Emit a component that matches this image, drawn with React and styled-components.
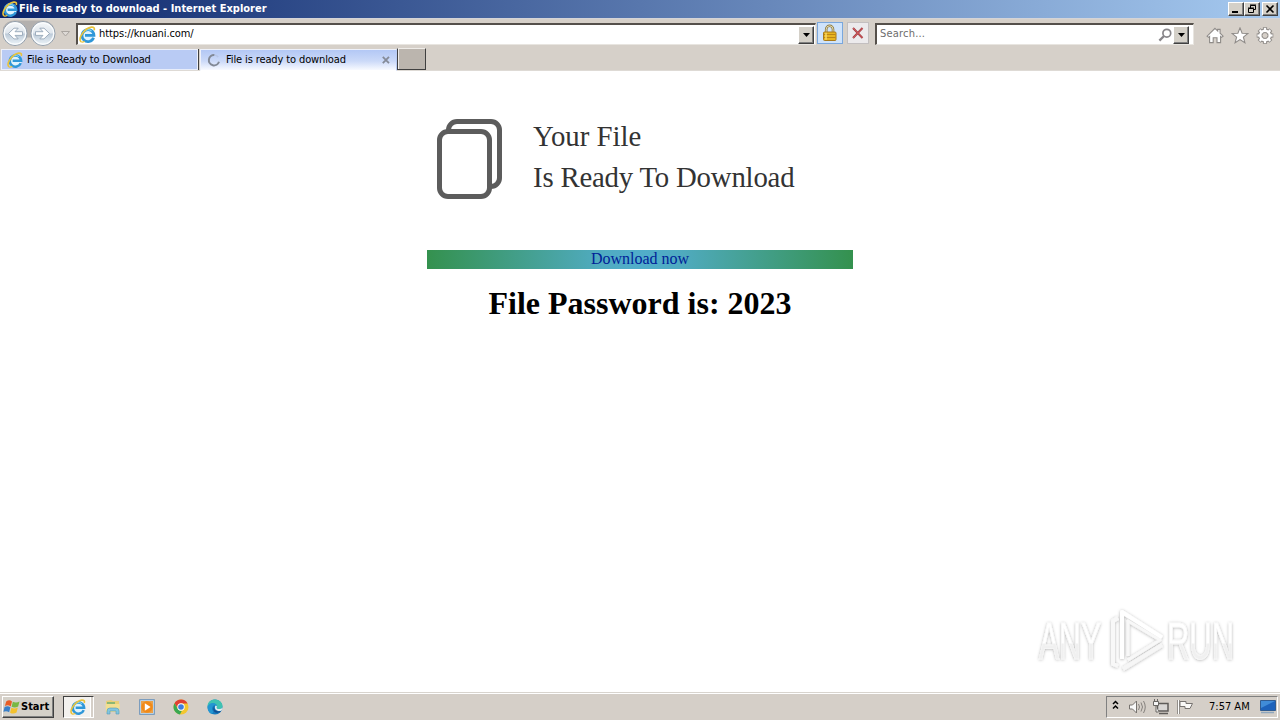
import React from 'react';
import styled, { createGlobalStyle, css } from 'styled-components';

const GlobalStyle = createGlobalStyle`
  html, body {
    margin: 0;
    padding: 0;
    overflow: hidden;
  }
  * { box-sizing: border-box; }
  svg { display: block; flex: none; }
`;

const uiFont = '"DejaVu Sans Condensed", "DejaVu Sans", sans-serif';

const Desktop = styled.div`
  width: 1280px;
  height: 720px;
  display: flex;
  flex-direction: column;
  background: #fff;
  font-family: ${uiFont};
  font-stretch: condensed;
  font-size: 11px;
  color: #000;
`;

const Label = styled.span`
  white-space: nowrap;
  line-height: 14px;
  letter-spacing: ${(p) => p.$spacing || 0}px;
  color: ${(p) => p.$color || 'inherit'};
  font-weight: ${(p) => (p.$bold ? 700 : 400)};
`;

const raised = css`
  background: #d4d0c8;
  border: 1px solid;
  border-color: #fff #404040 #404040 #fff;
  box-shadow: inset -1px -1px 0 #808080;
`;

const TitleBar = styled.div`
  height: 18px;
  flex: none;
  display: flex;
  align-items: center;
  padding: 0 2px 0 2px;
  background: linear-gradient(90deg, #0a246a 0%, #a6caf0 100%);
`;

const TitleText = styled(Label)`
  flex: 1;
  margin-left: 1px;
`;

const WindowButtons = styled.div`
  display: flex;
`;

const WindowButton = styled.div`
  ${raised}
  width: 16px;
  height: 14px;
  margin-left: ${(p) => (p.$gap ? 2 : 0)}px;
  display: flex;
  align-items: center;
  justify-content: center;
`;

const NavBar = styled.div`
  height: 30px;
  flex: none;
  display: flex;
  align-items: flex-start;
  background: #d6d0c9;
  border-top: 1px solid #d4d4d8;
  padding: 3px 0 0 1px;
`;

const Travel = styled.div`
  width: 75px;
  margin-top: -3px;
`;

const Field = styled.div`
  height: 22px;
  width: ${(p) => p.$width}px;
  margin: 1px 0 0 ${(p) => p.$left || 0}px;
  display: flex;
  align-items: center;
  background: #fff;
  border: 1px solid;
  border-color: #55504b #e8e5e0 #e8e5e0 #55504b;
  border-width: 2px 1px 1px 2px;
  padding: 0 ${(p) => p.$right}px 0 1px;
`;

const FieldText = styled(Label)`
  flex: 1;
  margin-top: -1px;
  padding-left: ${(p) => p.$indent || 0}px;
`;

const DropButton = styled.div`
  ${raised}
  width: 16px;
  height: 18px;
  display: flex;
  align-items: center;
  justify-content: center;
`;

const SquareButton = styled.div`
  width: ${(p) => p.$width}px;
  height: 22px;
  margin: 0 0 0 ${(p) => p.$left}px;
  display: flex;
  align-items: center;
  justify-content: center;
  border: 1px solid ${(p) => (p.$active ? '#7aa7dd' : '#c3bfc0')};
  background: ${(p) => (p.$active ? '#cfe3fb' : '#eceaec')};
`;

const Commands = styled.div`
  display: flex;
  gap: 7px;
  margin: 5px 0 0 12px;
`;

const TabRow = styled.div`
  height: 23px;
  flex: none;
  display: flex;
  background: #d6d0c9;
  padding-left: 1px;
  border-bottom: 1px solid #dedad5;
`;

const Tab = styled.div`
  width: ${(p) => p.$width}px;
  height: ${(p) => (p.$active ? 22 : 21)}px;
  margin-top: 1px;
  margin-right: 2px;
  display: flex;
  align-items: center;
  padding: 0 6px 0 5px;
  background: ${(p) => (p.$active ? 'linear-gradient(#b3c8f5, #cbd9f8 55%, #f8faff)' : '#b9cbf4')};
  border: 1px solid #eef1fa;
  border-right-color: ${(p) => (p.$active ? '#b9cbf4' : '#eef1fa')};
  border-bottom-color: ${(p) => (p.$active ? '#fff' : '#e8edfa')};
  box-shadow: ${(p) => (p.$active ? 'none' : '1px 0 0 #404040')};
`;

const TabLabel = styled(Label)`
  flex: 1;
  margin-left: 4px;
`;

const NewTab = styled.div`
  width: 29px;
  height: 22px;
  margin-left: -2px;
  background: #bbb5ae;
  border: 1px solid #404040;
  border-top-color: #efece8;
  box-shadow: inset 1px 0 0 #efece8;
`;

const Page = styled.main`
  position: relative;
  flex: 1;
  min-height: 0;
  background: #fff;
  font-family: "Liberation Serif", "Times New Roman", serif;
  font-stretch: normal;
`;

const Card = styled.section`
  width: 426px;
  margin: 0 auto;
  padding-top: 48px;
`;

const Heading = styled.div`
  display: flex;
  padding-left: 9px;
  height: 131px;
`;

const HeadingText = styled.div`
  margin: -3px 0 0 30px;
  font-size: 28.8px;
  line-height: 41px;
  color: #333;
  white-space: nowrap;
`;

const HeadingLine = styled.div`
  letter-spacing: ${(p) => p.$spacing || 0}px;
`;

const DownloadLink = styled.a`
  display: block;
  height: 19px;
  line-height: 18px;
  text-align: center;
  font-size: 16px;
  color: #002197;
  background: radial-gradient(circle, #51aecb 0%, #50abc1 18%, #34914e 100%);
`;

const Password = styled.h1`
  margin: 16px 0 0;
  font-size: 32px;
  line-height: 36px;
  text-align: center;
  white-space: nowrap;
`;

const Watermark = styled.div`
  position: absolute;
  left: 1030px;
  bottom: 10px;
`;

const Taskbar = styled.footer`
  height: 28px;
  flex: none;
  display: flex;
  align-items: center;
  background: #d5cfc8;
  border-top: 1px solid #d8d4ce;
  box-shadow: inset 0 1px 0 #fff;
  padding: 1px 2px 0 2px;
`;

const StartButton = styled.div`
  ${raised}
  width: 52px;
  height: 22px;
  display: flex;
  align-items: center;
  padding-left: 0;
`;

const Launchers = styled.div`
  flex: 1;
  display: flex;
  align-items: center;
  gap: 18px;
  margin-left: 9px;
`;

const PressedTask = styled.div`
  width: 31px;
  height: 22px;
  margin-right: -7px;
  display: flex;
  align-items: center;
  padding-left: 6px;
  background: #f3f1ee;
  border: 1px solid;
  border-color: #404040 #fff #fff #404040;
  box-shadow: inset -2px 0 0 #d5cfc8, inset -3px 0 0 #fff;
`;

const Tray = styled.div`
  width: 172px;
  height: 22px;
  display: flex;
  align-items: center;
  border: 1px solid;
  border-color: #808080 #fff #fff #808080;
  padding-left: 4px;
`;

const Clock = styled(Label)`
  width: 51px;
  margin-left: 14px;
`;

const IeIcon = ({ size = 17 }) => (
  <svg width={size} height={size} viewBox="0 0 17 17" fill="none">
    <circle cx="9" cy="9" r="6.8" fill="#dff3fd" />
    <path d="M14.6 11.800A6 6 0 1 1 15 9.300H6" stroke="#2f97d8" strokeWidth="2.700" />
    <path d="M4.200 6.500A5.500 5.500 0 0 1 12.500 5" stroke="#7fd2f3" strokeWidth="1.200" />
    <path d="M2.200 15.800C-1.500 12.500 5.500 2.200 12.400 1.200c2.300-.3 3.500.8 2.700 3" stroke="#e9c33c" strokeWidth="1.700" />
    <path d="M2.200 15.800c1 .5 2.300.1 3.400-.6" stroke="#e9c33c" strokeWidth="1.200" />
  </svg>
);

const TravelButtons = () => (
  <svg width="75" height="30" viewBox="0 0 75 30">
    <defs>
      <linearGradient id="orb" x1="0" y1="0" x2="0" y2="1">
        <stop offset="0" stopColor="#f6f8fa" />
        <stop offset=".48" stopColor="#dfe6ed" />
        <stop offset=".52" stopColor="#bccad8" />
        <stop offset="1" stopColor="#f0f7fb" />
      </linearGradient>
    </defs>
    <path d="M14 1.500h28a13 13 0 0 1 11 7l-3 10H5L2 8.500a13 13 0 0 1 12-7z" fill="#b3b0ae" />
    {[14, 42].map((x) => (
      <g key={x}>
        <circle cx={x} cy="14.500" r="12" fill="url(#orb)" stroke="#929eab" />
        <circle cx={x} cy="14.500" r="10.700" fill="none" stroke="#fafcfd" strokeWidth="1.200" />
      </g>
    ))}
    <path d="M21.500 12.700h-7.500l3.200-3.500h-4.200l-5.500 5.300 5.500 5.400h4.200L14 16.400h7.500z" fill="#fff" stroke="#96a7b8" strokeWidth=".9" />
    <path d="M34.500 12.700H42l-3.200-3.500H43l5.500 5.300-5.500 5.400h-4.200l3.200-3.500h-7.500z" fill="#fff" stroke="#96a7b8" strokeWidth=".9" />
    <path d="M60.500 12.500h8l-4 4.500z" fill="#dedad6" stroke="#aaa5a0" />
  </svg>
);

const Arrow = () => (
  <svg width="7" height="4"><path d="M0 0h7L3.500 4z" fill="#000" /></svg>
);

const LockIcon = () => (
  <svg width="16" height="18" viewBox="0 0 16 18">
    <path d="M4.200 9V5.200a3.300 3.300 0 0 1 6.800 0V9" fill="none" stroke="#8d7b45" strokeWidth="2.600" />
    <path d="M4.200 9V5.200a3.300 3.300 0 0 1 6.800 0V9" fill="none" stroke="#e5dcb0" strokeWidth="1" />
    <rect x="1.500" y="8" width="12.500" height="8.500" rx="1" fill="#e8b520" stroke="#a8791a" />
    <path d="M2 10.500h11.500M2 13.500h11.500" stroke="#bc8615" />
    <path d="M4 8.800v7" stroke="#f9dc6c" strokeWidth="1.400" />
  </svg>
);

const StopIcon = () => (
  <svg width="12" height="12" viewBox="0 0 12 12">
    <path d="M1 1l9.500 10M10.500 1L1 11" stroke="#9e3e43" strokeWidth="2" />
    <path d="M1 1l9.500 10M10.500 1L1 11" stroke="#d85a5d" strokeWidth="1" />
  </svg>
);

const SearchIcon = () => (
  <svg width="15" height="14" viewBox="0 0 15 14" fill="none" stroke="#88868a">
    <circle cx="8.800" cy="5.200" r="3.900" strokeWidth="1.700" />
    <path d="M6 8l-4.600 4.600" strokeWidth="2.300" />
  </svg>
);

const HomeIcon = () => (
  <svg width="18" height="17" viewBox="0 0 18 17" fill="#fff" stroke="#8f8b88" strokeWidth="1.100">
    <path d="M9 1.300l2.700 2.600V2.400h2.400v3.800l3 3-1.500 1.200-1-.9v6.100H11v-4.800H7.200v4.800H3.600V9.500l-1 .9-1.500-1.200z" />
  </svg>
);

const StarIcon = () => (
  <svg width="18" height="17" viewBox="0 0 18 17" fill="#fff" stroke="#8f8b88" strokeWidth="1.100">
    <path d="M9 .9l2.100 5.300 5.800.3-4.500 3.600 1.500 5.600L9 12.600l-4.900 3.100 1.500-5.600L1.100 6.500l5.800-.3z" />
  </svg>
);

const GearIcon = () => (
  <svg width="18" height="17" viewBox="0 0 18 17">
    {[['#8f8b88', 4.2, 8.3], ['#fff', 2.2, 7.6]].map(([color, width, reach]) => (
      <g key={color} stroke={color} strokeWidth={width}>
        {[0, 45, 90, 135].map((angle) => (
          <path key={angle} d={`M9 ${8.5 - reach}V${8.5 + reach}`} transform={`rotate(${angle} 9 8.5)`} />
        ))}
        <circle cx="9" cy="8.500" r={color === '#fff' ? 4.8 : 5} fill="none" />
      </g>
    ))}
    <circle cx="9" cy="8.500" r="3" fill="#d6d0c9" stroke="#8f8b88" />
  </svg>
);

const Spinner = () => (
  <svg width="16" height="16" viewBox="0 0 16 16" fill="none">
    <path d="M8.500 3A5.200 5.200 0 1 0 13 9.800" stroke="#828996" strokeWidth="2" />
    <path d="M8.500 3A5.200 5.200 0 0 1 12.200 5" stroke="#b7c5e5" strokeWidth="1.600" />
  </svg>
);

const CloseTabIcon = () => (
  <svg width="8" height="8" viewBox="0 0 8 8">
    <path d="M.8.8l6.200 6.400M7 .8L.8 7.200" stroke="#858b98" strokeWidth="1.800" />
  </svg>
);

const FilesIcon = () => (
  <svg width="67" height="80" viewBox="0 0 67 80" fill="none" stroke="#5c5c5c" strokeWidth="5">
    <path d="M12.500 12v-1a8.500 8.500 0 0 1 8.500-8.500h34a8.500 8.500 0 0 1 8.500 8.500v48a8.500 8.500 0 0 1-8.500 8.500" />
    <rect x="3.500" y="12.500" width="50" height="65" rx="8.500" fill="#fff" />
  </svg>
);

const WatermarkLogo = () => (
  <svg width="230" height="81" viewBox="0 0 230 81">
    <defs>
      <filter id="soft" x="-10%" y="-10%" width="120%" height="130%">
        <feDropShadow dx="0" dy=".5" stdDeviation="1.600" floodColor="#000" floodOpacity=".32" />
      </filter>
      <linearGradient id="fade" x1="0" y1="0" x2="0" y2="1">
        <stop offset=".52" stopColor="#fff" />
        <stop offset=".55" stopColor="#f0f0f0" />
      </linearGradient>
    </defs>
    <g filter="url(#soft)">
      <g fontFamily="Liberation Sans, sans-serif" fontSize="51" fill="url(#fade)" stroke="#f9f9f9" strokeWidth=".6">
        <text x="9" y="58" textLength="62" lengthAdjust="spacingAndGlyphs">ANY</text>
        <text x="137" y="58" textLength="67" lengthAdjust="spacingAndGlyphs">RUN</text>
      </g>
      <g fill="none" strokeWidth="4" strokeLinejoin="round">
        <path d="M88 17l-5 3v43l5 2" stroke="#f8f8f8" />
        <path d="M92 58V11l40 25.500" stroke="#fff" />
        <path d="M98 55V20l32 19-32 20" stroke="#f8f8f8" strokeWidth="3" />
        <path d="M93 68l39-24" stroke="#f6f6f6" />
      </g>
    </g>
  </svg>
);

const StartFlag = () => (
  <svg width="18" height="18" viewBox="0 0 17 17">
    <path d="M3 3.200q3-2 5.500 0L7.300 8Q4.800 6 1.800 7.600z" fill="#e85d25" />
    <path d="M9.300 3.600q3 1.600 6.300-.2L14.300 8q-3 2-6.200.3z" fill="#78b843" />
    <path d="M1.500 8.500q3-1.600 5.500.3L5.800 13.500Q3.300 11.700.4 13z" fill="#397fc8" />
    <path d="M7.900 9.200q3 1.600 6.100-.2L12.800 13.700q-3 2-6.100.2z" fill="#f3c12e" />
  </svg>
);

const ExplorerIcon = () => (
  <svg width="16" height="16" viewBox="0 0 16 16">
    <path d="M1 2l5-1 2 1h6v10H1z" fill="#e9cf78" />
    <path d="M2 3h8v3H2z" fill="#8bb774" />
    <path d="M.5 5h14.500l-1 8H1z" fill="#f2df91" />
    <path d="M2 15v-3a3 3 0 0 1 3-3h6a3 3 0 0 1 3 3v3h-3v-3H5v3z" fill="#82c5df" stroke="#549cbb" strokeWidth=".6" />
  </svg>
);

const PlayerIcon = () => (
  <svg width="16" height="16" viewBox="0 0 16 16">
    <rect x=".7" y=".7" width="14.600" height="14.600" fill="#cfe0ee" stroke="#6790b8" />
    <rect x="2" y="2" width="12" height="12" fill="#e9a14a" />
    <circle cx="8" cy="8" r="5.700" fill="#f18a18" />
    <path d="M5.800 4.300L11.600 8l-5.800 3.700z" fill="#fff" />
  </svg>
);

const ChromeIcon = () => (
  <svg width="16" height="16" viewBox="0 0 16 16">
    <circle cx="8" cy="8" r="7.500" fill="#f3c72f" />
    <path d="M1.500 4.200A7.500 7.500 0 0 1 14.600 4.500H8a3.500 3.500 0 0 0-3.100 5.100z" fill="#df4034" />
    <path d="M1.500 4.200l3.400 5.700A3.500 3.500 0 0 0 9 11.400l-2.100 4A7.500 7.500 0 0 1 1.500 4.200z" fill="#39a852" />
    <circle cx="8" cy="8" r="3.700" fill="#fff" />
    <circle cx="8" cy="8" r="2.800" fill="#3e7ee0" />
  </svg>
);

const EdgeIcon = () => (
  <svg width="17" height="16" viewBox="0 0 17 16">
    <circle cx="8" cy="8" r="7.500" fill="#1479bd" />
    <path d="M.6 8C0 .7 8-1.300 12.700 2c3.300 2.300 4 7.200.4 8-2 .5-4.200-.5-3.300-2C10.800 6 6.800 1.500.6 8z" fill="#3fc2b2" />
    <path d="M.6 8c1-4.700 7-5.100 9-2-4-.6-5.500 3.500-3.700 6.100C7.200 14.200 4.300 15 4.300 15A7.500 7.500 0 0 1 .6 8z" fill="#2396d2" />
    <path d="M7 7.500c-.5 4 3.700 6 7.300 4.300C12.200 15.500 4 14 7 7.500z" fill="#134d91" />
    <path d="M8.500 6.500c2 .2 1.500 1.500 1.100 2 .2 2.200 4.200 2 5.900 0 0 2-1 3-1.400 3.300C10 13 6.500 10 8.500 6.500z" fill="#e1edf0" />
  </svg>
);

const TrayIcons = () => (
  <svg width="84" height="18" viewBox="0 0 84 18" fill="none">
    <path d="M2 6l2.500-2.500L7 6M2 10.500L4.500 8 7 10.500" stroke="#000" strokeWidth="1.500" />
    <path d="M18.500 7h3l4-4v12l-4-4h-3z" fill="#f8f8f8" stroke="#77736f" />
    <path d="M27.500 6q2 3 0 6M30 4.500q3 4.500 0 9M32.500 3q3.500 6 0 12" stroke="#85817d" />
    <path d="M46.500 5.500h10.500v7.500H46.500zM48 15.500h9" fill="#d9d7d5" stroke="#5f5c59" strokeWidth="1.500" />
    <path d="M42.500 3.500h5v4h-5zM43.500 1v2M46.500 1v2M45 8v6h2.500" fill="#f5f5f5" stroke="#696663" />
    <path d="M67.500 2v14" stroke="#777370" strokeWidth="2.400" />
    <path d="M67.500 2v14" stroke="#fff" />
    <path d="M69 3.500h6v2h6.500l-2.500 5h-5v-2h-5z" fill="#faf9f7" stroke="#777370" />
  </svg>
);

const MonitorIcon = () => (
  <svg width="16" height="14" viewBox="0 0 16 14">
    <path d="M.5.5h15v10H.5z" fill="#1d62bb" stroke="#315c91" />
    <path d="M1 1h14L1 8z" fill="#408cd8" />
    <path d="M1 12.500h13" stroke="#8fa6bd" strokeWidth="1.500" />
  </svg>
);

const MinimizeGlyph = () => (
  <svg width="10" height="10"><path d="M1 8h6" stroke="#000" strokeWidth="2" /></svg>
);

const RestoreGlyph = () => (
  <svg width="10" height="10" fill="none" stroke="#000">
    <path d="M3.500 4V1.500h5v4H7M3 1h6M1.500 4.500h5v4h-5zM1 4h6" />
  </svg>
);

const CloseGlyph = () => (
  <svg width="10" height="10"><path d="M1.500 1.500l7 7M8.500 1.500l-7 7" stroke="#000" strokeWidth="1.600" /></svg>
);

const App = () => (
  <Desktop>
    <GlobalStyle />
    <TitleBar>
      <IeIcon size={16} />
      <TitleText $bold $color="#fff">File is ready to download - Internet Explorer</TitleText>
      <WindowButtons>
        <WindowButton><MinimizeGlyph /></WindowButton>
        <WindowButton><RestoreGlyph /></WindowButton>
        <WindowButton $gap><CloseGlyph /></WindowButton>
      </WindowButtons>
    </TitleBar>

    <NavBar>
      <Travel><TravelButtons /></Travel>
      <Field $width={740} $right={1}>
        <IeIcon />
        <FieldText $indent={3} $spacing={-0.1}>https://knuani.com/</FieldText>
        <DropButton><Arrow /></DropButton>
      </Field>
      <SquareButton $width={26} $left={1} $active><LockIcon /></SquareButton>
      <SquareButton $width={22} $left={4}><StopIcon /></SquareButton>
      <Field $width={319} $left={6} $right={4}>
        <FieldText $indent={2} $color="#6d6d6d" $spacing={0.2}>Search...</FieldText>
        <SearchIcon />
        <DropButton><Arrow /></DropButton>
      </Field>
      <Commands>
        <HomeIcon />
        <StarIcon />
        <GearIcon />
      </Commands>
    </NavBar>

    <TabRow>
      <Tab $width={197}>
        <IeIcon size={16} />
        <TabLabel $spacing={-0.12}>File is Ready to Download</TabLabel>
      </Tab>
      <Tab $width={197} $active>
        <Spinner />
        <TabLabel $spacing={-0.12}>File is ready to download</TabLabel>
        <CloseTabIcon />
      </Tab>
      <NewTab />
    </TabRow>

    <Page>
      <Card>
        <Heading>
          <FilesIcon />
          <HeadingText>
            <HeadingLine>Your File</HeadingLine>
            <HeadingLine $spacing={-0.2}>Is Ready To Download</HeadingLine>
          </HeadingText>
        </Heading>
        <DownloadLink>Download now</DownloadLink>
        <Password>File Password is: 2023</Password>
      </Card>
      <Watermark><WatermarkLogo /></Watermark>
    </Page>

    <Taskbar>
      <StartButton>
        <StartFlag />
        <Label $bold>Start</Label>
      </StartButton>
      <Launchers>
        <PressedTask><IeIcon size={16} /></PressedTask>
        <ExplorerIcon />
        <PlayerIcon />
        <ChromeIcon />
        <EdgeIcon />
      </Launchers>
      <Tray>
        <TrayIcons />
        <Clock>7:57 AM</Clock>
        <MonitorIcon />
      </Tray>
    </Taskbar>
  </Desktop>
);

export default App;
